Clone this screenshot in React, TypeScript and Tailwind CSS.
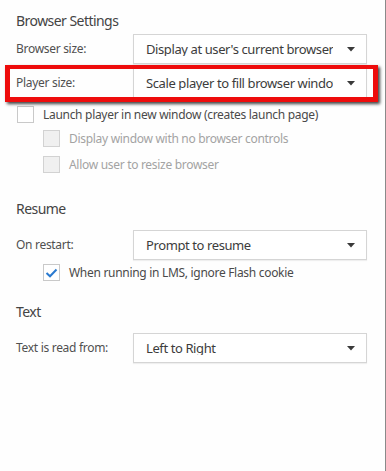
import React from "react";

function Arrow() {
  return (
    <svg width="8" height="5" viewBox="0 0 8 5" className="shrink-0">
      <path d="M0 0 L8 0 L4 4.5 Z" fill="#3a3a3a" />
    </svg>
  );
}

function Dropdown({ value }: { value: string }) {
  return (
    <div className="w-[234px] h-[30px] border border-[#d5d5d5] bg-white flex items-center pl-[12px] pr-[11px] shadow-[0_1px_1px_rgba(0,0,0,0.06)]">
      <div className="flex-1 overflow-hidden whitespace-nowrap text-[13px] tracking-[-0.4px] text-[#3c3c3c] leading-none mr-[14px]">
        {value}
      </div>
      <Arrow />
    </div>
  );
}

function Row({ label, value }: { label: string; value: string }) {
  return (
    <div className="flex items-center h-[30px]">
      <div className="w-[117px] text-[12px] tracking-[-0.3px] text-[#505050]">{label}</div>
      <Dropdown value={value} />
    </div>
  );
}

function Check({
  label,
  checked,
  disabled,
  className,
}: {
  label: string;
  checked?: boolean;
  disabled?: boolean;
  className?: string;
}) {
  return (
    <div className={"flex items-center h-[17px] " + (className ?? "")}>
      <div
        className={
          "w-[17px] h-[17px] border flex items-center justify-center shrink-0 " +
          (disabled ? "bg-[#f0f0f0] border-[#d2d2d2]" : "bg-white border-[#c9c9c9]")
        }
      >
        {checked && (
          <svg width="13" height="10" viewBox="0 0 13 10">
            <path d="M1.5 5 L5 8.3 L11.5 1.5" stroke="#2a7ad0" strokeWidth="2" fill="none" />
          </svg>
        )}
      </div>
      <div
        className={
          "ml-[9px] text-[12px] tracking-[-0.3px] whitespace-nowrap " +
          (disabled ? "text-[#a3a3a3]" : "text-[#4a4a4a]")
        }
      >
        {label}
      </div>
    </div>
  );
}

export default function App() {
  return (
    <div
      className="relative w-[386px] h-[471px] bg-[#fefefe] border-r border-[#8a8a8a] overflow-hidden"
      style={{ fontFamily: '"Noto Sans", sans-serif' }}
    >
      <div className="flex flex-col pl-4 pt-[10px]">
        <div className="h-5 flex items-center text-[14px] tracking-[-0.55px] text-[#444]">Browser Settings</div>
        <div className="mt-1">
          <Row label="Browser size:" value="Display at user's current browser size" />
        </div>
        <div className="mt-1">
          <Row label="Player size:" value="Scale player to fill browser window" />
        </div>
        <Check className="mt-2 ml-[1px]" label="Launch player in new window (creates launch page)" />
        <Check className="mt-[7px] ml-[27px]" label="Display window with no browser controls" disabled />
        <Check className="mt-[9px] ml-[27px]" label="Allow user to resize browser" disabled />

        <div className="mt-[25px] h-5 flex items-center text-[14px] tracking-[-0.55px] text-[#444]">Resume</div>
        <div className="mt-3">
          <Row label="On restart:" value="Prompt to resume" />
        </div>
        <Check className="mt-1 ml-[27px]" label="When running in LMS, ignore Flash cookie" checked />

        <div className="mt-5 h-5 flex items-center text-[14px] tracking-[-0.55px] text-[#444]">Text</div>
        <div className="mt-3">
          <Row label="Text is read from:" value="Left to Right" />
        </div>
      </div>

      <div className="absolute left-[5px] top-[65px] w-[373px] h-[37px] border-[5px] border-t-4 border-[#ee0c0c] shadow-[2px_2px_3px_rgba(0,0,0,0.75)]" />
    </div>
  );
}
